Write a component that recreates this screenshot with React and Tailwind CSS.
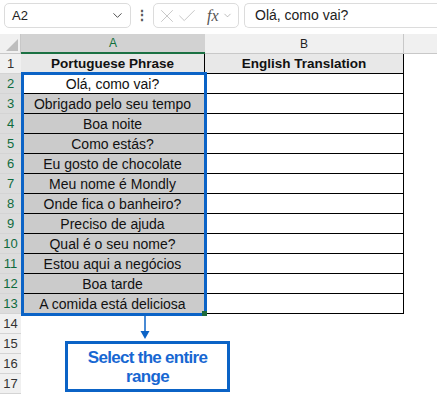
import { ChevronDown, X, Check } from "lucide-react";

const phrases = [
  "Olá, como vai?",
  "Obrigado pelo seu tempo",
  "Boa noite",
  "Como estás?",
  "Eu gosto de chocolate",
  "Meu nome é Mondly",
  "Onde fica o banheiro?",
  "Preciso de ajuda",
  "Qual é o seu nome?",
  "Estou aqui a negócios",
  "Boa tarde",
  "A comida está deliciosa",
];

function Toolbar() {
  return (
    <div className="h-[34px] flex items-start pt-[3px] pl-[4px] bg-white">
      {/* Name box */}
      <div className="w-[127px] h-[25px] rounded-[5px] border border-[#dcdcdc] flex items-center justify-between pl-[7px] pr-[5px] text-[13px] text-[#222]">
        <span>A2</span>
        <ChevronDown size={15} strokeWidth={1.5} className="text-[#444]" />
      </div>
      <div className="w-[22px] h-[25px] flex items-center justify-center text-[#555] text-[14px] font-bold">⋮</div>
      {/* fx box */}
      <div className="w-[86px] h-[25px] rounded-[5px] border border-[#dcdcdc] flex items-center pl-[2px]">
        <X size={22} strokeWidth={0.8} className="text-[#b4b4b4]" />
        <Check size={22} strokeWidth={0.8} className="text-[#b4b4b4] -ml-[2px]" />
        <span className="ml-[9px] text-[16px] italic text-[#555] leading-none" style={{ fontFamily: "'Liberation Serif', serif" }}>fx</span>
        <ChevronDown size={11} strokeWidth={1.4} className="text-[#999] ml-[3px]" />
      </div>
      {/* Formula box */}
      <div className="ml-[5px] flex-1 h-[25px] rounded-l-[5px] border border-r-0 border-[#dcdcdc] flex items-center pl-[10px] text-[14px] text-[#222]">
        Olá, como vai?
      </div>
    </div>
  );
}

function HeaderRow() {
  return (
    <div className="flex h-[20px] bg-[#f0f0f0]">
      <div className="w-[21px] h-full relative border-r border-b border-[#c8c8c8]">
        <svg width="12" height="12" className="absolute left-[6px] top-[5px]">
          <polygon points="12,0 12,12 0,12" fill="#bdbdbd" />
        </svg>
      </div>
      <div className="w-[184px] h-full bg-[#d2d2d2] border-b-2 border-[#1b7143] flex items-center justify-center text-[12px] text-[#0f703b]">
        A
      </div>
      <div className="w-[199px] h-full border-r border-b border-[#c8c8c8] flex items-center justify-center text-[12px] text-[#222]">
        B
      </div>
      <div className="flex-1 h-full border-b border-[#c8c8c8]" />
    </div>
  );
}

function RowHeader({ n, selected }) {
  return (
    <div
      className={`w-[21px] h-full shrink-0 border-b border-[#d4d4d4] flex items-center justify-center text-[13px] ${
        selected ? "bg-[#dcdcdc] text-[#0f6b3d]" : "bg-[#f0f0f0] text-[#333]"
      }`}
    >
      {n}
    </div>
  );
}

export default function App() {
  return (
    <div
      className="w-[437px] h-[395px] overflow-hidden bg-white relative"
      style={{ fontFamily: "'Liberation Sans', Arial, sans-serif" }}
    >
      <Toolbar />
      <div className="relative">
        <HeaderRow />

        {/* Row 1: headers */}
        <div className="flex h-[20px]">
          <RowHeader n={1} selected={false} />
          <div className="w-[184px] h-full bg-[#e8e8e8] border-r border-b border-black flex items-center justify-center pt-[1px] text-[13.5px] font-bold text-[#111]">
            Portuguese Phrase
          </div>
          <div className="w-[199px] h-full bg-[#e8e8e8] border-r border-b border-black flex items-center justify-center pt-[1px] text-[13.5px] font-bold text-[#111]">
            English Translation
          </div>
          <div className="flex-1" />
        </div>

        {phrases.map((p, i) => (
          <div key={i} className="flex h-[20px]">
            <RowHeader n={i + 2} selected />
            <div
              className={`w-[184px] h-full border-r border-b border-black flex items-center justify-center pt-[1px] text-[14px] text-[#111] ${
                i === 0 ? "bg-white" : "bg-[#cbcbcb]"
              }`}
            >
              {p}
            </div>
            <div className="w-[199px] h-full bg-white border-r border-b border-black" />
            <div className="flex-1" />
          </div>
        ))}

        {[14, 15, 16, 17].map((n) => (
          <div key={n} className="flex h-[20px]">
            <RowHeader n={n} selected={false} />
            <div className="flex-1" />
          </div>
        ))}

        {/* Selection border A2:A13 */}
        <div className="absolute left-[21px] top-[38px] w-[186px] h-[244px] border-[3px] border-[#0b63c6] pointer-events-none" />
        <div className="absolute left-[202px] top-[277px] w-[5px] h-[5px] bg-[#1e6b3c]" />

        {/* Arrow */}
        <svg className="absolute left-[139px] top-[282px]" width="12" height="24">
          <line x1="6" y1="0" x2="6" y2="17" stroke="#0b63c6" strokeWidth="1.5" />
          <polygon points="1.5,15 10.5,15 6,23" fill="#0b63c6" />
        </svg>

        {/* Callout */}
        <div className="absolute left-[65px] top-[307px] w-[165px] h-[51px] border-[3px] border-[#0b63c6] bg-white flex flex-col items-center justify-center text-[17px] font-bold leading-[19px] tracking-[-0.7px] text-[#1767d2]">
          <span>Select the entire</span>
          <span>range</span>
        </div>
      </div>
    </div>
  );
}
